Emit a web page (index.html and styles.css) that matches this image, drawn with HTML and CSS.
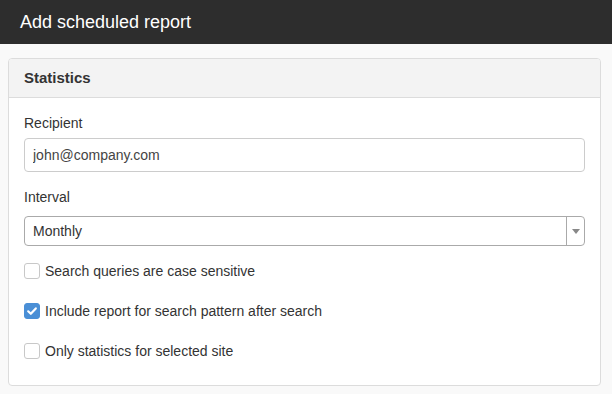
FILE: index.html
```html
<!DOCTYPE html>
<html lang="en">
<head>
    <meta charset="UTF-8">
    <title>Add scheduled report</title>
    <link rel="stylesheet" href="styles.css">
</head>
<body>
    <div class="topbar">Add scheduled report</div>

    <div class="panel">
        <div class="panel-head">Statistics</div>
        <div class="panel-body">
            <label class="field-label" for="recipient">Recipient</label>
            <input class="text-input" id="recipient" type="text" value="john@company.com">

            <label class="field-label interval">Interval</label>
            <div class="select">
                <span class="select-value">Monthly</span>
                <span class="select-arrow"></span>
            </div>

            <div class="checks">
                <label class="check">
                    <span class="box"></span>
                    Search queries are case sensitive
                </label>
                <label class="check">
                    <span class="box checked">
                        <svg width="12" height="12" viewBox="0 0 12 12">
                            <path d="M2.2 6.3 L4.8 8.8 L9.8 3.4" fill="none" stroke="#fff" stroke-width="2.2" stroke-linecap="round" stroke-linejoin="round"/>
                        </svg>
                    </span>
                    Include report for search pattern after search
                </label>
                <label class="check">
                    <span class="box"></span>
                    Only statistics for selected site
                </label>
            </div>
        </div>
    </div>
</body>
</html>
```

FILE: styles.css
```css
* {
    margin: 0;
    padding: 0;
    box-sizing: border-box;
}

body {
    background: #f9f9f9;
    font-family: "Liberation Sans", Arial, sans-serif;
    font-size: 14px;
    color: #333;
}

.topbar {
    height: 44px;
    padding: 0 20px;
    line-height: 44px;
    background: #2d2d2d;
    color: #fff;
    font-size: 18px;
}

.panel {
    margin: 14px 11px 0 8px;
    border: 1px solid #dcdcdc;
    border-radius: 4px;
    background: #fff;
    overflow: hidden;
}

.panel-head {
    height: 39px;
    padding: 0 15px;
    line-height: 38px;
    background: #f3f3f3;
    border-bottom: 1px solid #dcdcdc;
    font-size: 15px;
    font-weight: bold;
}

.panel-body {
    display: flex;
    flex-direction: column;
    padding: 16px 15px 22px;
}

.field-label {
    line-height: 18px;
    margin-bottom: 6px;
}

.field-label.interval {
    margin-top: 16px;
    margin-bottom: 10px;
}

.text-input {
    height: 34px;
    padding: 0 8px;
    border: 1px solid #ccc;
    border-radius: 4px;
    font: inherit;
    color: #444;
    outline: none;
}

.select {
    display: flex;
    height: 30px;
    border: 1px solid #aaa;
    border-radius: 4px;
}

.select-value {
    flex: 1;
    padding: 0 8px;
    line-height: 28px;
}

.select-arrow {
    position: relative;
    width: 18px;
    border-left: 1px solid #aaa;
}

.select-arrow::after {
    content: '';
    position: absolute;
    top: 12px;
    left: 5px;
    border: 4px solid transparent;
    border-top: 5px solid #888;
    border-bottom: 0;
}

.checks {
    display: flex;
    flex-direction: column;
    gap: 16px;
    margin-top: 13px;
}

.check {
    display: flex;
    align-items: center;
    gap: 5px;
    height: 24px;
}

.box {
    display: flex;
    align-items: center;
    justify-content: center;
    width: 16px;
    height: 16px;
    border: 1px solid #c8c8c8;
    border-radius: 3px;
    background: #fff;
}

.box.checked {
    border-color: #4a8fd6;
    background: #4a8fd6;
}
```
